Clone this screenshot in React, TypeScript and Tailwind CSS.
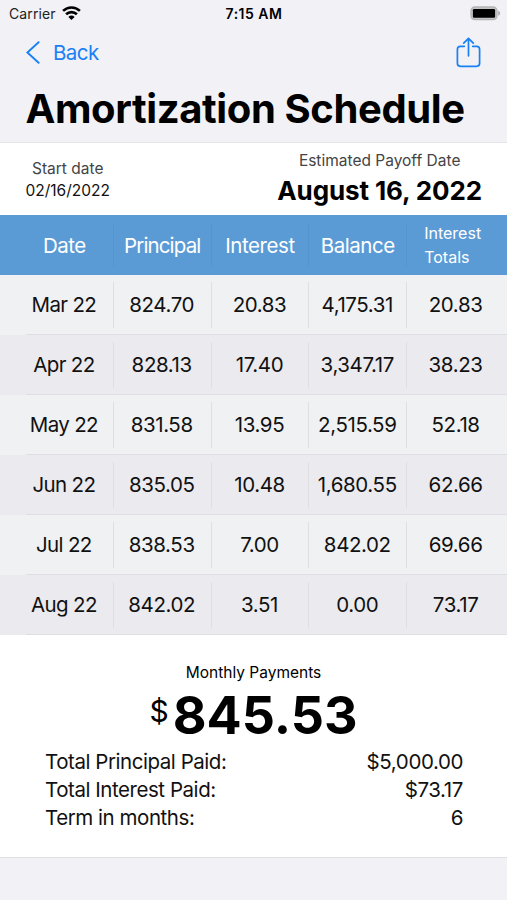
const columns = ["Date", "Principal", "Interest", "Balance"];

const payments = [
  ["Mar 22", "824.70", "20.83", "4,175.31", "20.83"],
  ["Apr 22", "828.13", "17.40", "3,347.17", "38.23"],
  ["May 22", "831.58", "13.95", "2,515.59", "52.18"],
  ["Jun 22", "835.05", "10.48", "1,680.55", "62.66"],
  ["Jul 22", "838.53", "7.00", "842.02", "69.66"],
  ["Aug 22", "842.02", "3.51", "0.00", "73.17"],
];

const totals = [
  { label: "Total Principal Paid:", value: "$5,000.00" },
  { label: "Total Interest Paid:", value: "$73.17" },
  { label: "Term in months:", value: "6" },
];

function WifiIcon() {
  return (
    <svg className="mb-[2px]" width="19" height="14" viewBox="0 0 19 14" fill="none" stroke="#000" strokeWidth="2.6">
      <path d="M1.1 4.9a12 12 0 0 1 16.8 0" />
      <path d="M4.1 8.3a7.7 7.7 0 0 1 10.8 0" />
      <path d="M9.5 14 6.4 10.9a4.4 4.4 0 0 1 6.2 0z" fill="#000" stroke="none" />
    </svg>
  );
}

function BatteryIcon() {
  return (
    <svg className="mb-px" width="31" height="15" viewBox="0 0 31 15">
      <rect x="1" y="1" width="26" height="12.6" rx="3.8" fill="#c4c4c6" stroke="#b4b4b7" strokeWidth="1.3" />
      <rect x="2.9" y="3" width="22.2" height="8.8" rx="1.2" fill="#000" />
      <path d="M28.2 4.800v5c1.200-.4 1.900-1.400 1.900-2.500S29.400 5.200 28.200 4.800z" fill="#adadb0" />
    </svg>
  );
}

function ShareIcon() {
  return (
    <svg
      width="25"
      height="31"
      viewBox="0 0 25 31"
      fill="none"
      stroke="#1a80f5"
      strokeWidth="1.7"
      strokeLinecap="round"
      strokeLinejoin="round"
    >
      <path d="M8.3 9.3H4.4a3 3 0 0 0-3 3v14a3 3 0 0 0 3 3h16.200a3 3 0 0 0 3-3v-14a3 3 0 0 0-3-3H16.700" />
      <path d="M12.5 18.800V1.600M7.700 6.200l4.800-4.800 4.800 4.800" />
    </svg>
  );
}

function Header() {
  return (
    <header className="h-[143px] border-b border-[#e6e6ea]">
      <div className="grid h-[27px] grid-cols-3 items-center pl-[9px] pr-[6px] text-[14px]">
        <div className="flex items-center gap-[6px]">
          <span className="tracking-[0.1px] text-[#222]">Carrier</span>
          <WifiIcon />
        </div>
        <span className="pr-[2px] text-center font-semibold tracking-[0.5px]">7:15 AM</span>
        <div className="flex justify-end">
          <BatteryIcon />
        </div>
      </div>
      <div className="flex h-[51px] items-center justify-between px-[26px]">
        <button className="flex items-center gap-[13px] text-[#1a80f5]">
          <svg width="14" height="23" viewBox="0 0 14 23" fill="none" stroke="currentColor" strokeWidth="1.9" strokeLinecap="round">
            <path d="M12.6 1.2 1.4 11.500l11.200 10.300" />
          </svg>
          <span className="text-[20.5px] leading-6 tracking-[-0.55px]">Back</span>
        </button>
        <ShareIcon />
      </div>
      <h1 className="whitespace-nowrap pl-[25.5px] text-[40px] font-bold leading-[62px] tracking-[-0.38px]">
        Amortization Schedule
      </h1>
    </header>
  );
}

function DateSummary() {
  return (
    <section className="flex h-[72px] justify-between bg-white pl-[25.5px] pr-[25px]">
      <div className="flex flex-col items-center pt-[15px]">
        <span className="text-[15.5px] leading-[22px] text-[#444]">Start date</span>
        <span className="text-[15.5px] leading-[21px] text-[#111]">02/16/2022</span>
      </div>
      <div className="flex flex-col items-center pt-[7px]">
        <span className="text-[15.5px] leading-[22px] text-[#444]">Estimated Payoff Date</span>
        <span className="text-[26px] font-bold leading-[38px] tracking-[-0.12px]">August 16, 2022</span>
      </div>
    </section>
  );
}

function ScheduleTable() {
  return (
    <section>
      <div className="grid h-[60px] grid-cols-5 bg-[#5b9bd5] pl-4 pr-[2px] text-white">
        {columns.map((column) => (
          <div key={column} className="flex items-center justify-center">
            <div
              className={`flex h-11 w-full items-center justify-center border-r border-[#5594cd] pt-[2px] text-[20.5px] ${
                column === "Principal" ? "tracking-[-0.85px]" : "tracking-[-0.45px]"
              }`}
            >
              {column}
            </div>
          </div>
        ))}
        <div className="flex flex-col justify-center pl-[17px] text-[16px] leading-6">
          <span>Interest</span>
          <span>Totals</span>
        </div>
      </div>
      {payments.map((row, index) => (
        <div
          key={row[0]}
          className={`relative grid h-[60px] grid-cols-5 items-center pl-4 pr-[2px] ${
            index % 2 === 0 ? "bg-[#f0f1f3]" : "bg-[#ebeaef]"
          }`}
        >
          {row.map((cell, i) => (
            <div
              key={i}
              className={`flex h-[46px] items-center justify-center pr-px pt-px text-[20.5px] text-[#111] ${
                i < 4 ? "border-r border-[#dfdfe3]" : ""
              } ${i === 0 ? "tracking-[-0.65px]" : "tracking-[-0.4px]"}`}
            >
              {cell}
            </div>
          ))}
          <div className="absolute bottom-0 left-[26px] right-0 h-px bg-[#dfdfe3]" />
        </div>
      ))}
    </section>
  );
}

function PaymentSummary() {
  return (
    <section className="flex h-[223px] flex-col border-b border-[#dedee2] bg-white pt-[27px]">
      <span className="text-center text-[15.5px] leading-[22px]">Monthly Payments</span>
      <div className="flex h-[64px] items-start justify-center">
        <span className="mr-[4px] mt-[7px] text-[30px] leading-[40px]">$</span>
        <span className="text-[52px] font-bold leading-[64px]">845.53</span>
      </div>
      <dl className="pl-[45px] pr-[44px]">
        {totals.map(({ label, value }) => (
          <div
            key={label}
            className="flex h-7 items-center justify-between text-[20.5px] text-[#111]"
          >
            <dt className="tracking-[-0.45px]">{label}</dt>
            <dd className="tracking-[-0.4px]">{value}</dd>
          </div>
        ))}
      </dl>
    </section>
  );
}

export default function App() {
  return (
    <main className="h-[900px] w-[507px] overflow-hidden bg-[#f1f1f6] font-[Inter,sans-serif] text-black">
      <Header />
      <DateSummary />
      <ScheduleTable />
      <PaymentSummary />
    </main>
  );
}
